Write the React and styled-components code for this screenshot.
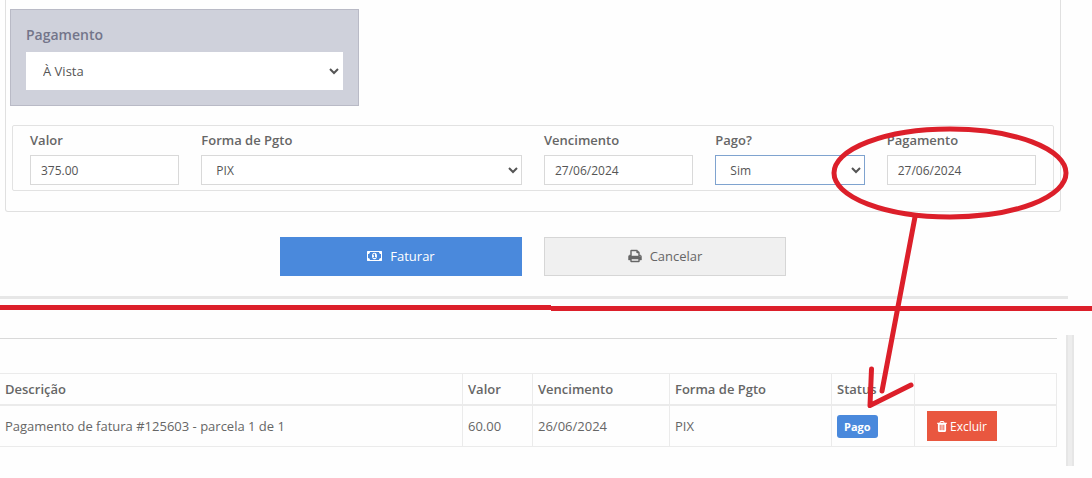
import React from 'react'
import styled, { createGlobalStyle, css } from 'styled-components'

const PAYMENTS = [
  {
    id: 125603,
    description: 'Pagamento de fatura #125603 - parcela 1 de 1',
    value: '60.00',
    dueDate: '26/06/2024',
    method: 'PIX',
    status: 'Pago',
  },
]

const App = () => {
  return (
    <>
      <GlobalStyle />
      <Page>
        <InvoiceForm onSubmit={(event) => event.preventDefault()}>
          <Panel>
            <PlanBox>
              <PlanLabel htmlFor='plan'>Pagamento</PlanLabel>
              <PlanSelect id='plan' defaultValue='vista'>
                <option value='vista'>À Vista</option>
                <option value='parcelado'>Parcelado</option>
              </PlanSelect>
            </PlanBox>
            <Installment>
              <Field>
                <Label htmlFor='value'>Valor</Label>
                <Input id='value' defaultValue='375.00' />
              </Field>
              <Field $span={2}>
                <Label htmlFor='method'>Forma de Pgto</Label>
                <Select id='method' defaultValue='pix'>
                  <option value='pix'>PIX</option>
                  <option value='boleto'>Boleto</option>
                </Select>
              </Field>
              <Field>
                <Label htmlFor='due'>Vencimento</Label>
                <Input id='due' defaultValue='27/06/2024' />
              </Field>
              <Field>
                <Label htmlFor='paid'>Pago?</Label>
                <Select id='paid' defaultValue='sim' $active>
                  <option value='sim'>Sim</option>
                  <option value='nao'>Não</option>
                </Select>
              </Field>
              <Field>
                <Label htmlFor='paid-at'>Pagamento</Label>
                <Input id='paid-at' defaultValue='27/06/2024' />
              </Field>
            </Installment>
          </Panel>
          <Actions>
            <SubmitButton type='submit'>
              <MoneyIcon />
              Faturar
            </SubmitButton>
            <CancelButton type='button'>
              <PrintIcon />
              Cancelar
            </CancelButton>
          </Actions>
        </InvoiceForm>

        <History>
          <HistoryContent>
            <Table>
              <thead>
                <tr>
                  <Th>Descrição</Th>
                  <Th $width={70}>Valor</Th>
                  <Th $width={137}>Vencimento</Th>
                  <Th $width={162}>Forma de Pgto</Th>
                  <Th $width={83}>Status</Th>
                  <Th $width={142} aria-label='Ações' />
                </tr>
              </thead>
              <tbody>
                {PAYMENTS.map((payment) => (
                  <tr key={payment.id}>
                    <Td>{payment.description}</Td>
                    <Td>{payment.value}</Td>
                    <Td>{payment.dueDate}</Td>
                    <Td>{payment.method}</Td>
                    <Td>
                      <Badge>{payment.status}</Badge>
                    </Td>
                    <ActionTd>
                      <DeleteButton type='button'>
                        <TrashIcon />
                        Excluir
                      </DeleteButton>
                    </ActionTd>
                  </tr>
                ))}
              </tbody>
            </Table>
          </HistoryContent>
          <Edge />
        </History>

        <Markup viewBox='0 0 1092 478' aria-hidden='true'>
          <path d='M0 307.500H551M551 308.500H1092' />
          <ellipse cx='950' cy='173' rx='116' ry='44' />
          <path d='M915 217L882 391' strokeLinecap='round' />
          <path
            d='M871.500 369L870 405.500L911 385'
            strokeLinecap='round'
            strokeLinejoin='round'
          />
        </Markup>
      </Page>
    </>
  )
}

const MoneyIcon = () => (
  <Icon viewBox='0 0 1920 1792' $width={15} $height={14} aria-hidden='true'>
    <path d='M768 1152h384v-96h-128v-448h-114l-148 137 77 80q42-37 55-57h2v288h-128v96zm512-256q0 70-21 142t-59.500 134-101.500 101-138 39-138-39-101.500-101-59.500-134-21-142 21-142 59.500-134 101.500-101 138-39 138 39 101.500 101 59.500 134 21 142zm512 256v-512q-106 0-181-75t-75-181h-1152q0 106-75 181t-181 75v512q106 0 181 75t75 181h1152q0-106 75-181t181-75zm128-832v1152q0 26-19 45t-45 19h-1792q-26 0-45-19t-19-45v-1152q0-26 19-45t45-19h1792q26 0 45 19t19 45z' />
  </Icon>
)

const PrintIcon = () => (
  <Icon
    viewBox='0 0 1792 1792'
    $width={14}
    $height={14}
    $bold
    aria-hidden='true'
  >
    <path d='M448 1536h896v-256h-896v256zm0-640h896v-384h-160q-40 0-68-28t-28-68v-160h-640v640zm1152 64q0-26-19-45t-45-19-45 19-19 45 19 45 45 19 45-19 19-45zm128 0v416q0 13-9.500 22.500t-22.500 9.500h-224v160q0 40-28 68t-68 28h-960q-40 0-68-28t-28-68v-160h-224q-13 0-22.500-9.500t-9.500-22.500v-416q0-79 56.500-135.500t135.500-56.500h64v-544q0-40 28-68t68-28h672q40 0 88 20t76 48l152 152q28 28 48 76t20 88v256h64q79 0 135.500 56.500t56.500 135.500z' />
  </Icon>
)

const TrashIcon = () => (
  <Icon viewBox='192 0 1408 1792' $width={10} $height={13} aria-hidden='true'>
    <path d='M704 1376v-704q0-14-9-23t-23-9h-64q-14 0-23 9t-9 23v704q0 14 9 23t23 9h64q14 0 23-9t9-23zm256 0v-704q0-14-9-23t-23-9h-64q-14 0-23 9t-9 23v704q0 14 9 23t23 9h64q14 0 23-9t9-23zm256 0v-704q0-14-9-23t-23-9h-64q-14 0-23 9t-9 23v704q0 14 9 23t23 9h64q14 0 23-9t9-23zm-544-992h448l-48-117q-7-9-17-11h-317q-10 2-17 11zm928 32v64q0 14-9 23t-23 9h-96v948q0 83-47 143.500t-113 60.500h-832q-66 0-113-58.500t-47-141.500v-952h-96q-14 0-23-9t-9-23v-64q0-14 9-23t23-9h309l70-167q15-37 54-63t79-26h320q40 0 79 26t54 63l70 167h309q14 0 23 9t9 23z' />
  </Icon>
)

const GlobalStyle = createGlobalStyle`
  *,
  *::before,
  *::after {
    box-sizing: border-box;
  }

  body {
    margin: 0;
    background: #fefefe;
    color: #666;
    font-family: 'Open Sans', sans-serif;
    font-size: 13px;
    line-height: 20px;
  }

  button,
  input,
  select {
    font-family: inherit;
  }
`

const Page = styled.main`
  position: relative;
`

const InvoiceForm = styled.form`
  margin-right: 24px;
  padding: 0 7px 20px 5px;
  border-bottom: 3px solid #e7e7e7;
`

const Panel = styled.section`
  padding: 9px 4px 20px;
  border: 1px solid #e0e0e0;
  border-top: 0;
  border-radius: 0 0 3px 3px;
`

const PlanBox = styled.div`
  display: flex;
  flex-direction: column;
  gap: 7px;
  width: 33.33%;
  padding: 15px;
  border: 1px solid #b9bac6;
  background: #cfd1db;
`

const Label = styled.label`
  color: #666;
  font-weight: 600;
`

const PlanLabel = styled(Label)`
  color: #73758a;
  font-size: 14px;
`

const control = css`
  width: 100%;
  height: 30px;
  padding: 0 10px;
  border: 1px solid #d9d9d9;
  border-radius: 0;
  outline: none;
  background: #fff;
  color: #555;
  font-size: 12px;
`

const Input = styled.input`
  ${control}
`

const Select = styled.select`
  ${control}
  padding-right: 0;
  border-color: ${(props) => (props.$active ? '#7fa3cf' : '#d9d9d9')};
`

const PlanSelect = styled(Select)`
  height: 38px;
  padding-left: 12px;
  border-color: #fff;
  font-size: 13px;
`

const Installment = styled.div`
  display: grid;
  grid-template-columns: repeat(6, 1fr);
  column-gap: 22px;
  margin: 19px 2px 0;
  padding: 4px 17px 5px;
  border: 1px solid #e2e2e2;
  border-radius: 2px;
`

const Field = styled.div`
  display: flex;
  flex-direction: column;
  gap: 5px;
  grid-column: span ${(props) => props.$span || 1};
  min-width: 0;
`

const Actions = styled.div`
  display: grid;
  grid-template-columns: repeat(4, 1fr);
  column-gap: 22px;
  margin-top: 25px;
  padding: 0 11px;
`

const Button = styled.button`
  display: flex;
  align-items: center;
  justify-content: center;
  gap: 8px;
  height: 39px;
  padding: 0 8px 2px;
  border: 1px solid;
  font-size: 13px;
  cursor: pointer;
`

const SubmitButton = styled(Button)`
  grid-column: 2;
  border-color: #4a89dc;
  background: #4a89dc;
  color: #fff;
`

const CancelButton = styled(Button)`
  grid-column: 3;
  border-color: #d6d6d6;
  background: #f0f0f0;
  color: #666;
`

const Icon = styled.svg`
  flex: none;
  width: ${(props) => props.$width}px;
  height: ${(props) => props.$height}px;
  fill: currentColor;
  stroke: currentColor;
  stroke-width: ${(props) => (props.$bold ? 60 : 0)};
`

const History = styled.section`
  display: flex;
  gap: 9px;
  margin: 36px 18px 0 0;
`

const HistoryContent = styled.div`
  flex: 1;
  margin-top: 3px;
  padding: 34px 0 19px;
  border-top: 1px solid #d9d9d9;
`

/* right edge of the content card */
const Edge = styled.div`
  width: 8px;
  border: solid #e6e6e6;
  border-width: 0 2px;
  background: #ededed;
`

const Table = styled.table`
  width: 100%;
  border-collapse: collapse;
  table-layout: fixed;
`

const cell = css`
  padding: 5px;
  border: 1px solid #ebebeb;
  text-align: left;

  &:first-child {
    border-left: 0;
  }
`

const Th = styled.th`
  ${cell}
  width: ${(props) => (props.$width ? `${props.$width}px` : 'auto')};
  border-bottom-width: 2px;
  font-weight: 600;
`

const Td = styled.td`
  ${cell}
`

const ActionTd = styled(Td)`
  padding-left: 12px;
`

const Badge = styled.span`
  display: block;
  width: fit-content;
  padding: 2px 7px;
  border-radius: 3px;
  background: #4a89dc;
  color: #fff;
  font-size: 11px;
  font-weight: 700;
  line-height: 19px;
`

const DeleteButton = styled.button`
  display: flex;
  align-items: center;
  gap: 3px;
  height: 30px;
  padding: 0 10px;
  border: 0;
  background: #e9573f;
  color: #fff;
  font-size: 12px;
  font-weight: 500;
  cursor: pointer;
`

const Markup = styled.svg`
  position: absolute;
  top: 0;
  left: 0;
  width: 100%;
  fill: none;
  stroke: #dc1f2a;
  stroke-width: 5px;
  pointer-events: none;
`

export default App
